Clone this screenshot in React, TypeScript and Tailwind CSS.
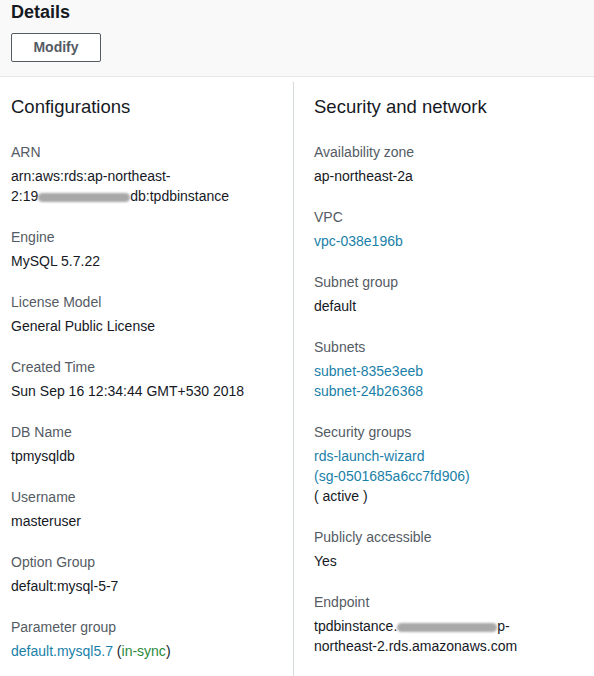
import React from "react";

type Value = { text: React.ReactNode; link?: boolean };
type Field = { label: string; values: Value[] };

const Redact = ({ w }: { w: number }) => (
  <span
    className="inline-block h-[9px] align-middle rounded-full bg-[#a8a8a8] blur-[1px]"
    style={{ width: w }}
  />
);

const left: Field[] = [
  {
    label: "ARN",
    values: [
      { text: "arn:aws:rds:ap-northeast-" },
      {
        text: (
          <>
            2:19
            <Redact w={92} />
            db:tpdbinstance
          </>
        ),
      },
    ],
  },
  { label: "Engine", values: [{ text: "MySQL 5.7.22" }] },
  { label: "License Model", values: [{ text: "General Public License" }] },
  { label: "Created Time", values: [{ text: "Sun Sep 16 12:34:44 GMT+530 2018" }] },
  { label: "DB Name", values: [{ text: "tpmysqldb" }] },
  { label: "Username", values: [{ text: "masteruser" }] },
  { label: "Option Group", values: [{ text: "default:mysql-5-7" }] },
  {
    label: "Parameter group",
    values: [
      {
        text: (
          <>
            <span className="text-[#1a7fa8]">default.mysql5.7</span> (
            <span className="text-[#2a8a3a]">in-sync</span>)
          </>
        ),
      },
    ],
  },
];

const right: Field[] = [
  { label: "Availability zone", values: [{ text: "ap-northeast-2a" }] },
  { label: "VPC", values: [{ text: "vpc-038e196b", link: true }] },
  { label: "Subnet group", values: [{ text: "default" }] },
  {
    label: "Subnets",
    values: [
      { text: "subnet-835e3eeb", link: true },
      { text: "subnet-24b26368", link: true },
    ],
  },
  {
    label: "Security groups",
    values: [
      { text: "rds-launch-wizard", link: true },
      { text: "(sg-0501685a6cc7fd906)", link: true },
      { text: "( active )" },
    ],
  },
  { label: "Publicly accessible", values: [{ text: "Yes" }] },
  {
    label: "Endpoint",
    values: [
      {
        text: (
          <>
            tpdbinstance.
            <Redact w={100} />
            p-
          </>
        ),
      },
      { text: "northeast-2.rds.amazonaws.com" },
    ],
  },
];

function Column({ title, fields }: { title: string; fields: Field[] }) {
  return (
    <div>
      <h2 className="text-[18.5px] leading-[22px] text-[#16191f] mb-[24px]">{title}</h2>
      <div className="flex flex-col gap-[21px]">
        {fields.map((f) => (
          <div key={f.label}>
            <div className="text-[14px] leading-[20px] text-[#545b64] mb-[4px]">{f.label}</div>
            {f.values.map((v, i) => (
              <div
                key={i}
                className={`text-[14px] leading-[20px] whitespace-nowrap ${
                  v.link ? "text-[#1a7fa8]" : "text-[#16191f]"
                }`}
              >
                {v.text}
              </div>
            ))}
          </div>
        ))}
      </div>
    </div>
  );
}

export default function App() {
  return (
    <div className="w-[594px] h-[676px] overflow-hidden bg-white flex flex-col font-['Liberation_Sans',Arial,sans-serif]">
      <div className="bg-[#f9f9f9] border-b border-[#e6e8e8] px-[11px] pt-[1px] pb-[14px]">
        <h1 className="text-[18px] leading-[22px] font-bold text-[#16191f]">Details</h1>
        <button className="mt-[10px] w-[90px] h-[29px] border border-[#545b64] rounded-[2px] bg-white text-[14px] font-bold text-[#545b64]">
          Modify
        </button>
      </div>
      <div className="flex flex-1 pt-[5px]">
        <div className="w-[293px] pl-[11px] pt-[14px]">
          <Column title="Configurations" fields={left} />
        </div>
        <div className="flex-1 border-l border-[#d5dbdb] pl-[20px] pt-[14px]">
          <Column title="Security and network" fields={right} />
        </div>
      </div>
    </div>
  );
}
